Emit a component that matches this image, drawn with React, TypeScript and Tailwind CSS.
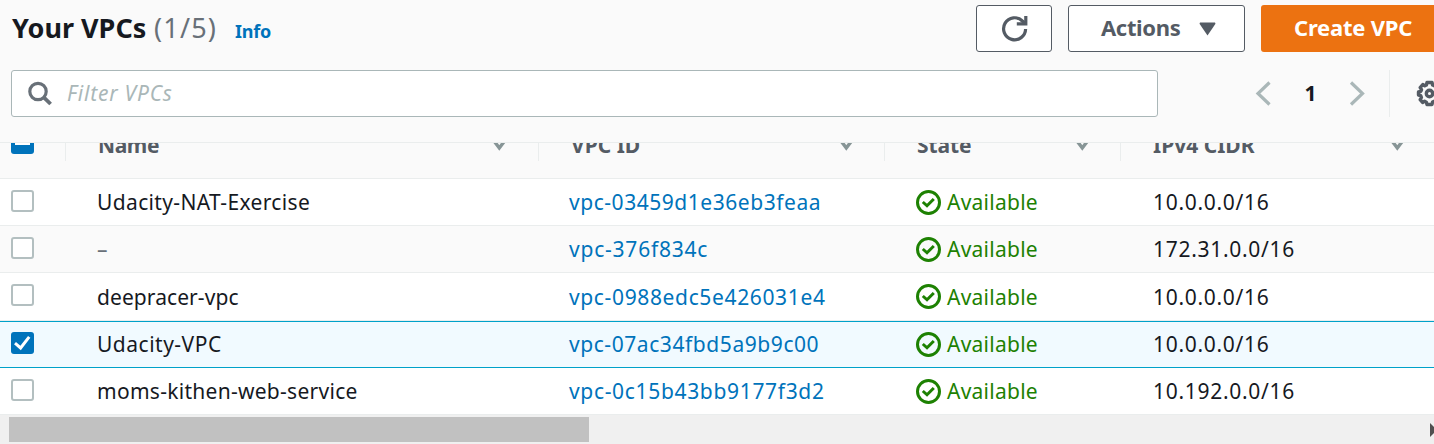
import React from "react";
import clsx from "clsx";

type Vpc = {
  name: string;
  nameStyle: string;
  id: string;
  idStyle: string;
  cidr: string;
  row: string;
  line: string;
  selected?: boolean;
};

const vpcs: Vpc[] = [
  { name: "Udacity-NAT-Exercise", nameStyle: "tracking-[0.36px]", id: "vpc-03459d1e36eb3feaa", idStyle: "tracking-[0.54px]", cidr: "10.0.0.0/16", row: "h-[47px] border-b border-[#eaeded] bg-white", line: "leading-[46px]" },
  { name: "–", nameStyle: "text-[#687078]", id: "vpc-376f834c", idStyle: "tracking-[0.78px]", cidr: "172.31.0.0/16", row: "h-[47px] border-b border-[#eaeded] bg-[#fafafa]", line: "leading-[46px]" },
  { name: "deepracer-vpc", nameStyle: "tracking-[0.08px]", id: "vpc-0988edc5e426031e4", idStyle: "tracking-[0.64px]", cidr: "10.0.0.0/16", row: "h-[48px] border-b border-[#eaeded] bg-white", line: "leading-[48px]" },
  { name: "Udacity-VPC", nameStyle: "tracking-[0.5px]", id: "vpc-07ac34fbd5a9b9c00", idStyle: "tracking-[0.57px]", cidr: "10.0.0.0/16", row: "h-[47px] border-y border-[#00a1c9] bg-[#f1faff]", line: "leading-[44px]", selected: true },
  { name: "moms-kithen-web-service", nameStyle: "tracking-[0.28px]", id: "vpc-0c15b43bb9177f3d2", idStyle: "tracking-[0.67px]", cidr: "10.192.0.0/16", row: "h-[46px] bg-white", line: "leading-[46px]" },
];

function Checkbox({ checked }: { checked?: boolean }) {
  return (
    <span
      className={clsx(
        "flex h-[22px] w-[23px] items-center justify-center rounded-[3px]",
        checked ? "bg-[#0073bb]" : "border-2 border-[#b3bfc0] bg-white",
      )}
    >
      {checked && (
        <svg width="23" height="22" viewBox="0 0 23 22" fill="none" stroke="#fff" strokeWidth="3">
          <path d="M4 11.2 L9.6 16 L18.2 4.8" />
        </svg>
      )}
    </span>
  );
}

function StatusIcon() {
  return (
    <svg className="shrink-0" width="25" height="25" viewBox="0 0 25 25" fill="none" stroke="#1d8102" strokeWidth="3">
      <circle cx="12.5" cy="12.5" r="11" />
      <path d="M6.8 12 L11 15.8 L17.8 9" />
    </svg>
  );
}

function SortIcon() {
  return (
    <svg className="shrink-0" width="15" height="13" viewBox="0 0 15 13" fill="none" stroke="#879596" strokeWidth="3.4">
      <path d="M2.2 2.2 H12.4 L7.3 9 Z" />
    </svg>
  );
}

function HeaderCell({ label, className, labelStyle }: { label: string; className: string; labelStyle?: string }) {
  return (
    <div className={clsx("flex shrink-0 justify-between", className)}>
      <div className={clsx("flex h-[34px] border-l border-[#eaeded] pl-8 pt-[2px] text-[21px] leading-[32px] font-bold text-[#545b64]", labelStyle)}>{label}</div>
      <div className="pt-[12px]">
        <SortIcon />
      </div>
    </div>
  );
}

export default function App() {
  return (
    <div className="flex h-[444px] w-[1434px] flex-col overflow-hidden bg-[#fafafa] font-['Noto_Sans',sans-serif] whitespace-nowrap text-[#16191f]">
      <header className="flex h-[70px] shrink-0 items-start pt-[5px] pl-[12px]">
        <h1 className="flex w-[223px] text-[27px] leading-[46px] font-bold">
          <span className="w-[142px]">Your VPCs</span>
          <span className="font-normal tracking-[1.2px] text-[#687078]">(1/5)</span>
        </h1>
        <a className="flex-1 pt-[3px] text-[18px] leading-[46px] font-bold tracking-[-0.2px] text-[#0073bb]">Info</a>
        <button className="flex h-[47px] w-[76px] items-center justify-center rounded-[3px] border border-[#545b64] bg-white">
          <svg width="27" height="27" viewBox="0 0 27 27" fill="none" stroke="#545b64" strokeWidth="3.2">
            <path d="M24.6 14 A11 11 0 1 1 21.4 6 L23.5 8" />
            <path d="M24.8 1 V8.8 H15.8" />
          </svg>
        </button>
        <button className="ml-4 flex h-[47px] w-[177px] items-center rounded-[3px] border border-[#545b64] bg-white pl-8 text-[22px] font-bold text-[#545b64]">
          <span className="w-[98px] pb-[2px] text-left tracking-[-0.35px]">Actions</span>
          <svg width="17" height="14" viewBox="0 0 17 14" fill="#545b64">
            <path d="M1 0.5 H16 L16.5 1.8 L8.5 13.5 L0.5 1.8 Z" />
          </svg>
        </button>
        <button className="ml-4 -mr-[17px] h-[47px] w-[190px] shrink-0 rounded-[3px] bg-[#ec7211] pb-[2px] pl-[33px] text-left text-[22px] font-bold tracking-[-0.22px] text-white">
          Create VPC
        </button>
      </header>

      <div className="flex h-[72px] shrink-0 items-start pl-[11px]">
        <div className="flex h-[47px] w-[1147px] shrink-0 items-center rounded-[3px] border border-[#aab7b8] bg-white pl-4">
          <svg width="25" height="25" viewBox="0 0 25 25" fill="none" stroke="#687078" strokeWidth="3.2">
            <circle cx="10" cy="10.5" r="8.2" />
            <path d="M15.8 16.3 L22.6 23" strokeWidth="3.8" />
          </svg>
          <span className="ml-[14px] text-[21px] tracking-[0.78px] text-[#aab7b8] italic">Filter VPCs</span>
        </div>
        <div className="ml-[97px] flex h-[47px] items-center">
          <svg width="17" height="25" viewBox="0 0 17 25" fill="none" stroke="#aab7b8" strokeWidth="3.2">
            <path d="M14.5 1.5 L3 12.5 L14.5 23.5" />
          </svg>
          <span className="w-[77px] text-center text-[21px] font-bold text-[#16191f]">1</span>
          <svg width="17" height="25" viewBox="0 0 17 25" fill="none" stroke="#aab7b8" strokeWidth="3.2">
            <path d="M2 1.5 L13.5 12.5 L2 23.5" />
          </svg>
        </div>
        <div className="ml-[23px] flex h-[47px] shrink-0 items-center border-l border-[#eaeded] pl-[26px]">
          <svg width="27" height="27" viewBox="0 0 27 27" fill="none" stroke="#545b64" strokeWidth="3.4" strokeLinejoin="round">
            <path d="M11 2.5 H16 L16.6 5 L18.7 5.9 L21 4.5 L23.2 8 L21.6 10.2 L22.3 11.5 L24.5 12 V15 L22.3 15.6 L21.6 17.2 L23 19.3 L20 22.5 L18.2 21.2 L16.5 22 L16 24.5 H11 L10.4 22.2 L8.6 21.3 L6.6 22.5 L4.2 19.6 L5.4 17.5 L4.8 15.7 L2.5 15 V12 L4.8 11.3 L5.5 9.7 L4.2 7.6 L6.8 4.5 L8.8 5.8 L10.4 5 Z" />
            <circle cx="13.5" cy="13.5" r="3.2" />
          </svg>
        </div>
      </div>

      <div className="h-[37px] shrink-0 overflow-hidden border-y border-[#eaeded]">
        <div className="-mt-[16px] flex items-start">
          <div className="w-[65px] shrink-0 pt-[5px] pl-[11px]">
            <span className="flex h-[22px] w-[23px] items-center justify-center rounded-[3px] bg-[#0073bb]">
              <span className="h-[3px] w-[15px] bg-white" />
            </span>
          </div>
          <HeaderCell label="Name" className="mr-[31px] w-[442px]" labelStyle="tracking-[-0.4px]" />
          <HeaderCell label="VPC ID" className="mr-[30px] w-[316px]" />
          <HeaderCell label="State" className="mr-[30px] w-[206px]" labelStyle="tracking-[-0.1px]" />
          <HeaderCell label="IPv4 CIDR" className="w-[285px]" />
        </div>
      </div>

      <div className="flex shrink-0 flex-col text-[21px]">
        {vpcs.map((vpc) => (
          <div key={vpc.id} className={clsx("flex shrink-0 overflow-hidden", vpc.row, vpc.line)}>
            <div className={clsx("w-[97px] shrink-0 pl-[11px]", vpc.selected ? "pt-[10px]" : "pt-[11px]")}>
              <Checkbox checked={vpc.selected} />
            </div>
            <div className={clsx("w-[472px] shrink-0", vpc.nameStyle)}>{vpc.name}</div>
            <div className={clsx("w-[347px] shrink-0 text-[#0073bb]", vpc.idStyle)}>{vpc.id}</div>
            <div className="flex w-[237px] shrink-0 text-[#1d8102]">
              <span className={vpc.selected ? "pt-[10px]" : "pt-[11px]"}>
                <StatusIcon />
              </span>
              <span className="ml-[6px] tracking-[0.25px]">Available</span>
            </div>
            <div className="shrink-0 tracking-[0.7px]">{vpc.cidr}</div>
          </div>
        ))}
      </div>

      <div className="flex h-[30px] shrink-0 justify-between border-t border-[#eaeded] bg-[#f0f0f0] pt-[2px] pl-[9px]">
        <div className="h-[25px] w-[580px] bg-[#c1c1c1]" />
        <svg className="mt-[6px]" width="4" height="14" viewBox="0 0 4 14" fill="#505050">
          <path d="M0 0 L4 4 V10 L0 14 Z" />
        </svg>
      </div>
    </div>
  );
}
